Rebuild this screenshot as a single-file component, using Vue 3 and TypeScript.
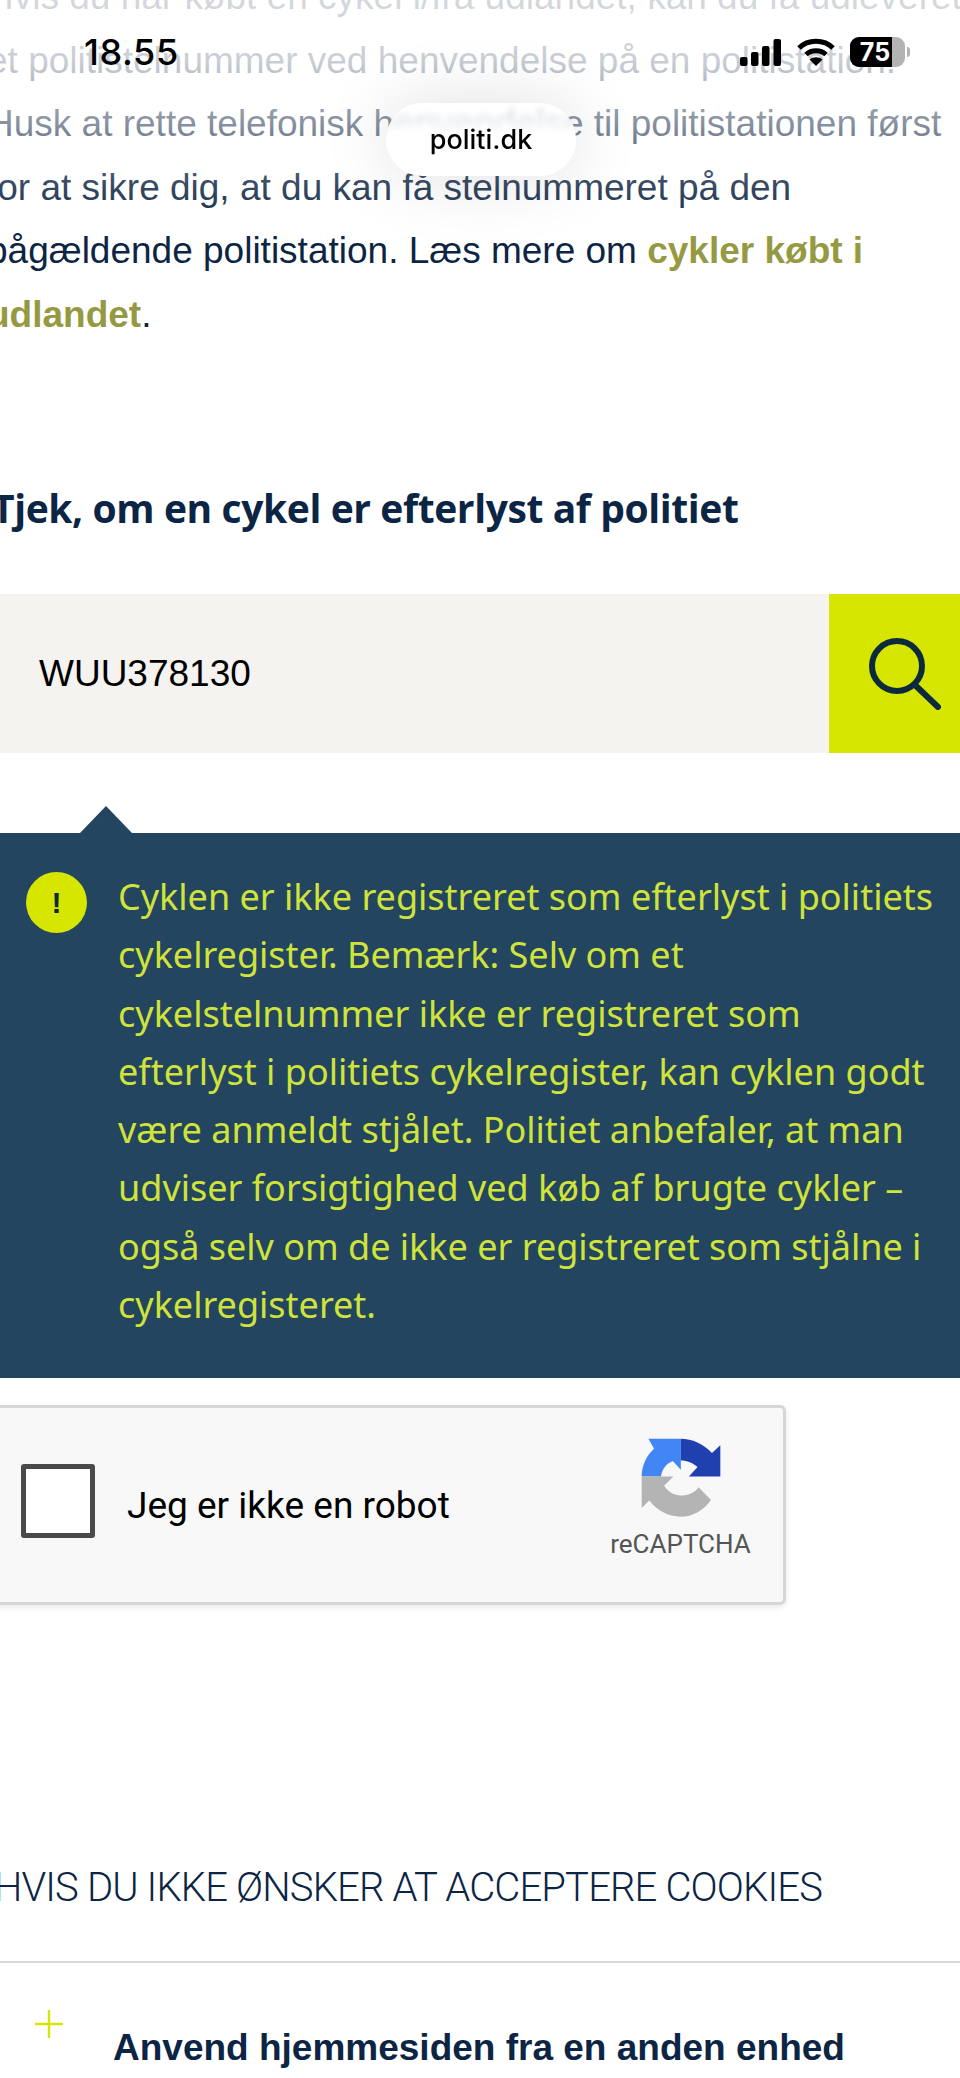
<script setup lang="ts">
const introLines = [
  'Hvis du har købt en cykel i/fra udlandet, kan du få udleveret',
  'et politistelnummer ved henvendelse på en politistation.',
  'Husk at rette telefonisk henvendelse til politistationen først',
  'for at sikre dig, at du kan få stelnummeret på den',
]
const bannerLines = [
  'Cyklen er ikke registreret som efterlyst i politiets',
  'cykelregister. Bemærk: Selv om et',
  'cykelstelnummer ikke er registreret som',
  'efterlyst i politiets cykelregister, kan cyklen godt',
  'være anmeldt stjålet. Politiet anbefaler, at man',
  'udviser forsigtighed ved køb af brugte cykler –',
  'også selv om de ikke er registreret som stjålne i',
  'cykelregisteret.',
]
</script>

<template>
  <div class="page">
    <div class="intro">
      <div v-for="line in introLines" :key="line" class="intro--line">{{ line }}</div>
      <div class="intro--line">pågældende politistation. Læs mere om <a class="intro--link">cykler købt i</a></div>
      <div class="intro--line"><a class="intro--link">udlandet</a>.</div>
    </div>

    <h2 class="check-title">Tjek, om en cykel er efterlyst af politiet</h2>

    <div class="search">
      <div class="search--input">WUU378130</div>
      <button class="search--button" aria-label="Søg">
        <svg width="72" height="72" viewBox="0 0 72 72" fill="none" stroke="#0c2a3e" stroke-width="6" stroke-linecap="round">
          <circle cx="28" cy="28" r="25" />
          <line x1="46" y1="47" x2="69" y2="69" />
        </svg>
      </button>
    </div>

    <div class="result">
      <div class="result--arrow"></div>
      <div class="result--icon">!</div>
      <div class="result--text">
        <div v-for="line in bannerLines" :key="line">{{ line }}</div>
      </div>
    </div>

    <div class="captcha">
      <div class="captcha--check"></div>
      <div class="captcha--label">Jeg er ikke en robot</div>
      <div class="captcha--brand">
        <svg width="82" height="82" viewBox="150 80 245 245">
          <path fill="#4285f4" d="M155 198C155 165 170 135 192 115L175 85L272 85L272 178L248 152C228 160 215 178 213 198Z" />
          <path fill="#2040b0" d="M272 85C305 85 340 100 365 128L390 105L390 198L296 198L322 170C310 158 290 150 272 150Z" />
          <path fill="#b4b4b4" d="M155 198L250 198L222 226C235 245 252 255 272 255C295 255 315 245 325 230L362 268C340 300 305 318 272 318C235 318 200 300 178 270L155 292Z" />
        </svg>
        <div class="captcha--name">reCAPTCHA</div>
      </div>
    </div>

    <h3 class="cookies-title">HVIS DU IKKE ØNSKER AT ACCEPTERE COOKIES</h3>

    <div class="accordion">
      <svg class="accordion--plus" width="28" height="28" viewBox="0 0 28 28" stroke="#d6e600" stroke-width="2.400">
        <line x1="14" y1="0" x2="14" y2="28" />
        <line x1="0" y1="14" x2="28" y2="14" />
      </svg>
      <div class="accordion--title">Anvend hjemmesiden fra en anden enhed</div>
    </div>

    <div class="fade"></div>

    <div class="status">
      <div class="status--time">18.55</div>
      <div class="status--icons">
        <svg width="42" height="27" viewBox="0 0 42 27" fill="#000">
          <rect x="0" y="18" width="7.500" height="9" rx="2" />
          <rect x="11" y="13" width="7.500" height="14" rx="2" />
          <rect x="22" y="7" width="7.500" height="20" rx="2" />
          <rect x="33.500" y="0" width="7.500" height="27" rx="2" />
        </svg>
        <svg width="38" height="28" viewBox="0 0 38 28" fill="none" stroke="#000" stroke-width="5">
          <path d="M2 10C11 1 27 1 36 10" />
          <path d="M9 16.500C14.500 11.500 23.500 11.500 29 16.500" />
          <path d="M19 28L12.500 21.500C16 18.500 22 18.500 25.500 21.500Z" fill="#000" stroke="none" />
        </svg>
        <div class="battery">
          <div class="battery--level"></div>
          <span class="battery--value">75</span>
        </div>
        <div class="battery--nub"></div>
      </div>
    </div>

    <div class="address">politi.dk</div>
  </div>
</template>

<style>
html,
body {
  margin: 0;
  background: #ffffff;
}
</style>

<style scoped>
.page {
  position: relative;
  width: 960px;
  height: 2078px;
  overflow: hidden;
  font-family: "Liberation Sans", Arial, sans-serif;
  color: #0d2543;
}
.intro {
  margin: -35px 0 0 -13px;
  font-size: 37px;
  line-height: 63.500px;
  white-space: nowrap;
}
.intro--line {
  height: 63.500px;
}
.intro--link {
  color: #959a42;
  font-weight: 700;
}
.check-title {
  margin: 137px 0 0 -8px;
  font-family: "Open Sans", sans-serif;
  font-size: 39px;
  line-height: 50px;
  font-weight: 700;
  letter-spacing: -0.400px;
  color: #0c2545;
  white-space: nowrap;
}
.search {
  display: flex;
  height: 159px;
  margin-top: 61px;
}
.search--input {
  flex: auto;
  display: flex;
  align-items: center;
  padding-left: 39px;
  background: #f4f3ef;
  font-size: 37px;
  color: #000000;
}
.search--button {
  display: flex;
  align-items: center;
  justify-content: center;
  flex: none;
  width: 131px;
  padding: 0 0 0 20px;
  border: none;
  background: #d6e600;
}
.result {
  position: relative;
  display: flex;
  gap: 31px;
  margin-top: 80px;
  height: 545px;
  padding: 35px 0 0 26px;
  box-sizing: border-box;
  background: #23455f;
}
.result--arrow {
  position: absolute;
  left: 80px;
  top: -27px;
  width: 0;
  height: 0;
  border-left: 26px solid transparent;
  border-right: 26px solid transparent;
  border-bottom: 27px solid #23455f;
}
.result--icon {
  flex: none;
  width: 61px;
  height: 61px;
  margin-top: 4px;
  border-radius: 50%;
  background: #d6e600;
  color: #0c2a3e;
  font-size: 30px;
  font-weight: 700;
  line-height: 61px;
  text-align: center;
}
.result--text {
  font-family: "Noto Sans", sans-serif;
  font-size: 36px;
  line-height: 58.300px;
  color: #cfe33b;
  white-space: nowrap;
}
.captcha {
  display: flex;
  align-items: center;
  box-sizing: border-box;
  width: 796px;
  height: 200px;
  margin: 27px 0 0 -10px;
  padding-left: 28px;
  background: #f8f8f8;
  border: 3px solid #d6d6d6;
  border-radius: 6px;
  box-shadow: 0 2px 6px rgba(0, 0, 0, 0.1);
}
.captcha--check {
  flex: none;
  box-sizing: border-box;
  width: 74px;
  height: 74px;
  margin-bottom: 8px;
  background: #ffffff;
  border: 5px solid #4a4a4a;
  border-radius: 3px;
}
.captcha--label {
  flex: auto;
  margin-left: 32px;
  font-family: Roboto, sans-serif;
  font-size: 37px;
  color: #000000;
}
.captcha--brand {
  flex: none;
  width: 143px;
  margin: 0 31px 14px 0;
  text-align: center;
}
.captcha--brand svg {
  display: block;
  margin: 0 auto 10px;
}
.captcha--name {
  font-family: Roboto, sans-serif;
  font-size: 26px;
  line-height: 30px;
  color: #555555;
}
.cookies-title {
  margin: 258px 0 0 -6px;
  font-family: Roboto, sans-serif;
  font-size: 40px;
  line-height: 50px;
  font-weight: 300;
  letter-spacing: -0.850px;
  color: #0c2545;
  white-space: nowrap;
}
.accordion {
  position: relative;
  margin-top: 48px;
  height: 120px;
  border-top: 2px solid #d9d9d9;
}
.accordion--plus {
  position: absolute;
  left: 35px;
  top: 47px;
}
.accordion--title {
  padding: 62px 0 0 113px;
  font-size: 37px;
  line-height: 46px;
  font-weight: 700;
  color: #0c2545;
  white-space: nowrap;
}
.fade {
  position: absolute;
  left: 0;
  top: 0;
  width: 960px;
  height: 240px;
  background: linear-gradient(
    rgba(255, 255, 255, 0.82) 0,
    rgba(255, 255, 255, 0.78) 60px,
    rgba(255, 255, 255, 0.5) 123px,
    rgba(255, 255, 255, 0.16) 187px,
    rgba(255, 255, 255, 0) 240px
  );
}
.status {
  position: absolute;
  left: 84px;
  right: 50px;
  top: 30px;
  display: flex;
  align-items: center;
  justify-content: space-between;
}
.status--time {
  font-family: Inter, sans-serif;
  font-size: 36px;
  line-height: 44px;
  font-weight: 500;
  letter-spacing: 0.600px;
  color: #000000;
}
.status--icons {
  display: flex;
  align-items: center;
  gap: 15px;
}
.battery {
  position: relative;
  width: 55px;
  height: 30px;
  border-radius: 9px;
  background: #b3b3b3;
  overflow: hidden;
}
.battery--level {
  width: 42px;
  height: 30px;
  background: #000000;
}
.battery--value {
  position: absolute;
  left: 0;
  top: 0;
  width: 50px;
  font-family: Inter, sans-serif;
  font-size: 25px;
  line-height: 30px;
  font-weight: 700;
  text-align: center;
  color: #ffffff;
}
.battery--nub {
  width: 3px;
  height: 10px;
  margin-left: -13px;
  border-radius: 0 3px 3px 0;
  background: #b3b3b3;
}
.address {
  position: absolute;
  left: 386px;
  top: 103px;
  width: 190px;
  height: 73px;
  box-sizing: border-box;
  padding-top: 17px;
  border-radius: 37px;
  background: linear-gradient(rgba(255, 255, 255, 0.4) 0, #ffffff 42%);
  backdrop-filter: blur(3px);
  box-shadow: 0 0 70px rgba(0, 0, 0, 0.13);
  font-family: Inter, sans-serif;
  font-size: 27px;
  line-height: 40px;
  font-weight: 500;
  text-align: center;
  color: #000000;
}
</style>
